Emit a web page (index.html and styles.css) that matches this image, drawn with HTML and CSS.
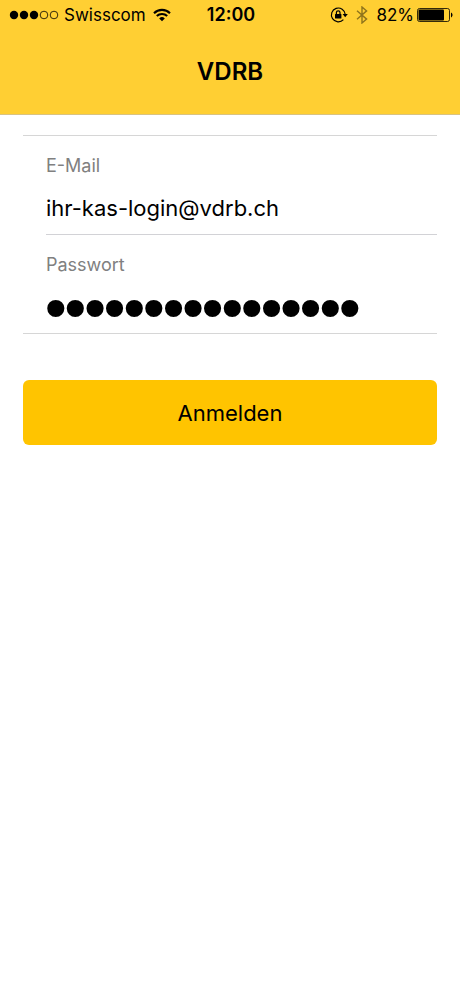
FILE: index.html
```html
<!DOCTYPE html>
<html lang="de">
<head>
    <meta charset="UTF-8">
    <meta name="viewport" content="width=device-width, initial-scale=1.0">
    <title>VDRB - Anmelden</title>
    <link rel="stylesheet" href="styles.css">
</head>
<body>
    <header class="header">
        <div class="status">
            <div class="status-left">
                <svg class="signal" width="50" height="10" viewBox="0 0 50 10">
                    <circle cx="5" cy="5" r="4.2"/>
                    <circle cx="15" cy="5" r="4.2"/>
                    <circle cx="25" cy="5" r="4.2"/>
                    <circle cx="35" cy="5" r="3.8" fill="none" stroke="#000" stroke-width="0.8"/>
                    <circle cx="45" cy="5" r="3.8" fill="none" stroke="#000" stroke-width="0.8"/>
                </svg>
                <span>Swisscom</span>
                <svg class="wifi" width="18" height="14" viewBox="0 0 18 14">
                    <path d="M1 5.2a11.4 11.4 0 0 1 16 0M3.8 8.1a7.4 7.4 0 0 1 10.4 0" fill="none" stroke="#000" stroke-width="2.1"/>
                    <path d="M9 13.2L6.2 10.4a4 4 0 0 1 5.6 0z"/>
                </svg>
            </div>
            <span class="time">12:00</span>
            <div class="status-right">
                <svg class="lock" width="18" height="18" viewBox="0 0 18 18">
                    <path d="M13.4 13.6A6.9 6.9 0 1 1 15.2 8.4" fill="none" stroke="#000" stroke-width="1.2"/>
                    <path d="M12.6 8h5.2l-2.6 3.2z"/>
                    <rect x="5" y="8" width="6.4" height="4.6" rx="0.5"/>
                    <path d="M6.4 8.4V6.6a1.8 1.8 0 0 1 3.6 0v1.8" fill="none" stroke="#000" stroke-width="1.2"/>
                </svg>
                <svg class="bluetooth" width="12" height="18" viewBox="0 0 12 18">
                    <path d="M1 4.8l9.6 8.3L6 17V1l4.6 3.9L1 13.2" fill="none" stroke="#8f741c" stroke-width="1.4"/>
                </svg>
                <span>82%</span>
                <svg class="battery" width="36" height="14" viewBox="0 0 36 14">
                    <rect x="0.5" y="0.5" width="32" height="13" rx="2" fill="none" stroke="#000" stroke-width="0.8"/>
                    <rect x="1.5" y="1.6" width="25.5" height="10.8" rx="1"/>
                    <path d="M34 4.6c2 .8 2 4 0 4.8z"/>
                </svg>
            </div>
        </div>
        <h1>VDRB</h1>
    </header>

    <form class="login">
        <div class="fields">
            <div class="field">
                <label for="email">E-Mail</label>
                <input type="email" id="email" value="ihr-kas-login@vdrb.ch">
            </div>
            <div class="field">
                <label for="passwort">Passwort</label>
                <input type="password" id="passwort" value="0123456789abcdef">
            </div>
        </div>
        <button type="button">Anmelden</button>
    </form>
</body>
</html>
```
FILE: styles.css
```css
* {
    box-sizing: border-box;
}
body {
    margin: 0;
    min-height: 100vh;
    background-color: #fff;
    color: #000;
    font-family: Inter, "Liberation Sans", sans-serif;
}
.header {
    background-color: #ffcf33;
    border-bottom: 1px solid #d9c382;
}
.status {
    display: grid;
    grid-template-columns: 1fr auto 1fr;
    align-items: center;
    height: 30px;
    padding: 0 7px 0 9px;
    font-size: 17px;
    line-height: 30px;
}
.status-left,
.status-right {
    display: flex;
    align-items: center;
}
.status-left {
    gap: 5px;
}
.status-right {
    justify-content: flex-end;
    gap: 8px;
}
.wifi {
    margin-left: 2px;
}
.battery {
    margin-left: -5px;
}
.time {
    font-size: 18px;
    font-weight: 600;
}
h1 {
    margin: 0;
    padding: 26px 0;
    font-size: 24px;
    font-weight: 600;
    line-height: 32px;
    text-align: center;
}
.login {
    padding: 20px 23px;
}
.fields {
    border-top: 1px solid #d6d6d6;
    border-bottom: 1px solid #d6d6d6;
}
.field {
    margin-left: 23px;
    padding: 18px 0 8px;
}
.field + .field {
    border-top: 1px solid #d2d2d6;
}
label {
    display: block;
    color: #808080;
    font-size: 18px;
    line-height: 24px;
}
input {
    display: block;
    width: 100%;
    height: 36px;
    margin-top: 12px;
    padding: 0;
    border: none;
    outline: none;
    background: none;
    color: #000;
    font-family: inherit;
    font-size: 22px;
}
/* big round dots */
input[type="password"] {
    font-family: "Liberation Sans", sans-serif;
    font-size: 56px;
    -webkit-text-stroke: 2px #000;
}
button {
    display: block;
    width: 100%;
    height: 65px;
    margin-top: 46px;
    border: none;
    border-radius: 6px;
    background-color: #ffc400;
    color: #000;
    font-family: inherit;
    font-size: 22px;
    cursor: pointer;
}
```
